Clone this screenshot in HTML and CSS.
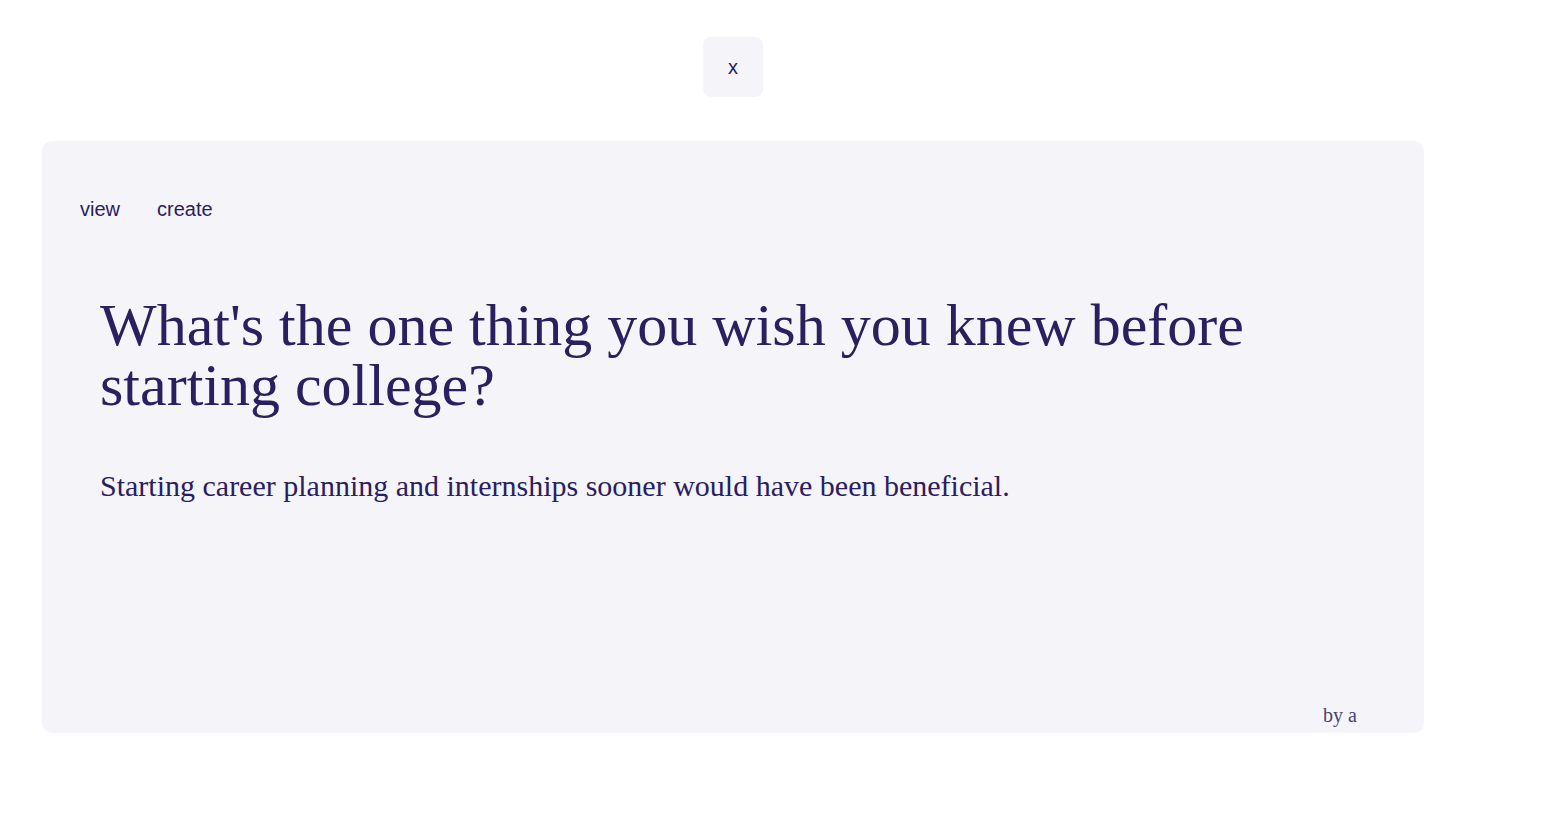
FILE: index.html
```html
<!DOCTYPE html>
<html>
<head>
<meta charset="utf-8">
<link rel="stylesheet" href="styles.css">
</head>
<body>
<div class="page">
  <div class="top">
    <button class="close">x</button>
  </div>
  <div class="card">
    <nav class="nav">
      <a class="nav-link">view</a>
      <a class="nav-link">create</a>
    </nav>
    <div class="content">
      <h1 class="question">What's the one thing you wish you knew before starting college?</h1>
      <p class="answer">Starting career planning and internships sooner would have been beneficial.</p>
    </div>
    <div class="author">by a</div>
  </div>
</div>
</body>
</html>
```

FILE: styles.css
```css
html, body {
  margin: 0;
  padding: 0;
  background: #ffffff;
}
body {
  font-family: "Liberation Serif", "Times New Roman", serif;
  color: #2a2060;
}
.page {
  width: 1382px;
  padding: 37px 0 0 42px;
}
.top {
  display: flex;
  justify-content: center;
}
.close {
  width: 60px;
  height: 60px;
  border: none;
  border-radius: 8px;
  background: #f5f4f9;
  color: #2a2060;
  font-family: "Liberation Sans", Arial, sans-serif;
  font-size: 20px;
  padding: 0;
  cursor: pointer;
}
.card {
  margin-top: 44px;
  height: 592px;
  box-sizing: border-box;
  background: #f5f4f9;
  border-radius: 10px;
  padding: 56px 67px 0 38px;
  display: flex;
  flex-direction: column;
}
.nav {
  display: flex;
  gap: 37px;
  font-family: "Liberation Sans", Arial, sans-serif;
  font-size: 20px;
  line-height: 24px;
}
.nav-link {
  color: #2a2060;
}
.content {
  padding-left: 20px;
  flex: 1;
}
.question {
  margin: 74px 0 0 0;
  font-weight: normal;
  font-size: 60px;
  line-height: 60px;
  max-width: 1220px;
}
.answer {
  margin: 53px 0 0 0;
  font-size: 30px;
  line-height: 36px;
}
.author {
  align-self: flex-end;
  font-size: 20px;
  line-height: 24px;
  color: #4a4275;
  margin-bottom: 6px;
}
```
